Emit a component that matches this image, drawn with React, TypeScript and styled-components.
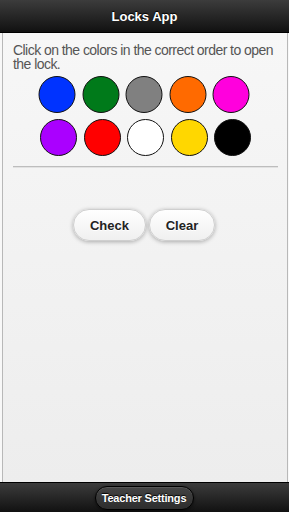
import React from "react";
import styled, { createGlobalStyle } from "styled-components";

const Global = createGlobalStyle`
  html, body { margin: 0; padding: 0; height: 512px; overflow: hidden; }
  body { font-family: "Liberation Sans", Arial, sans-serif; background: #f4f4f4; }
  #root { height: 512px; }
`;

const Page = styled.div`
  height: 512px;
  display: flex;
  flex-direction: column;
`;

const Header = styled.header`
  height: 32px;
  flex: none;
  background: linear-gradient(#3c3c3c, #111111);
  border-bottom: 1px solid #000;
  display: flex;
  align-items: center;
  justify-content: center;
  color: #fff;
  font-weight: bold;
  font-size: 13px;
  text-shadow: 0 -1px 1px #000;
`;

const Frame = styled.div`
  flex: 1;
  display: flex;
  padding: 0 1px 0 2px;
  background: #f8f8f8;
`;

const Content = styled.main`
  flex: 1;
  border-left: 1px solid #b8b8b8;
  border-right: 1px solid #b8b8b8;
  background: linear-gradient(#f7f7f7, #ededed);
  padding: 10px 9px 0 10px;
  display: flex;
  flex-direction: column;
`;

const Instructions = styled.p`
  margin: 0;
  font-size: 14px;
  line-height: 14px;
  letter-spacing: -0.55px;
  color: #555;
`;

const Palette = styled.div`
  display: flex;
  flex-direction: column;
  align-items: center;
  gap: 6px;
  margin-top: 5px;
`;

const Row = styled.div<{ $shift: number }>`
  display: flex;
  gap: 6.5px;
  transform: translateX(${(p) => p.$shift}px);
`;

const Swatch = styled.div<{ $color: string }>`
  width: 35px;
  height: 35px;
  border-radius: 50%;
  border: 1px solid #111;
  background: ${(p) => p.$color};
`;

const Rule = styled.hr`
  margin: 10px 0 0;
  border: none;
  border-top: 1px solid #bdbdbd;
  border-bottom: 1px solid #e2e2e2;
`;

const Actions = styled.div`
  display: flex;
  justify-content: center;
  gap: 3px;
  margin-top: 41px;
  margin-left: -3px;
`;

const Button = styled.button<{ $w: number }>`
  width: ${(p) => p.$w}px;
  height: 32px;
  border-radius: 16px;
  border: 1px solid #cfcfcf;
  background: linear-gradient(#ffffff, #f0f0f0);
  box-shadow: 0 1px 4px rgba(0, 0, 0, 0.3);
  font-family: "Liberation Sans", Arial, sans-serif;
  font-weight: bold;
  font-size: 13px;
  color: #222;
  text-shadow: 0 1px 0 #fff;
  padding: 0;
  cursor: pointer;
`;

const Footer = styled.footer`
  height: 29px;
  flex: none;
  background: linear-gradient(#3c3c3c, #111111);
  border-top: 1px solid #000;
  display: flex;
  align-items: center;
  justify-content: center;
`;

const DarkButton = styled.button`
  height: 24px;
  width: 99px;
  border-radius: 12px;
  border: 1px solid #000;
  background: linear-gradient(#444, #2d2d2d);
  box-shadow: 0 1px 3px rgba(0, 0, 0, 0.5), inset 0 1px 0 rgba(255, 255, 255, 0.1);
  color: #fff;
  font-family: "Liberation Sans", Arial, sans-serif;
  font-weight: bold;
  font-size: 11px;
  letter-spacing: -0.2px;
  text-shadow: 0 -1px 1px #000;
  padding: 0;
  margin-left: -1px;
`;

const rows = [
  { shift: -1.5, colors: ["#0033ff", "#007a1a", "#808080", "#ff6a00", "#ff00dd"] },
  { shift: 0, colors: ["#aa00ff", "#ff0000", "#ffffff", "#ffd700", "#000000"] },
];

export default function App() {
  return (
    <Page>
      <Global />
      <Header>Locks App</Header>
      <Frame>
        <Content>
          <Instructions>Click on the colors in the correct order to open the lock.</Instructions>
          <Palette>
            {rows.map((r, i) => (
              <Row key={i} $shift={r.shift}>
                {r.colors.map((c) => (
                  <Swatch key={c} $color={c} />
                ))}
              </Row>
            ))}
          </Palette>
          <Rule />
          <Actions>
            <Button $w={73}>Check</Button>
            <Button $w={66}>Clear</Button>
          </Actions>
        </Content>
      </Frame>
      <Footer>
        <DarkButton>Teacher Settings</DarkButton>
      </Footer>
    </Page>
  );
}
